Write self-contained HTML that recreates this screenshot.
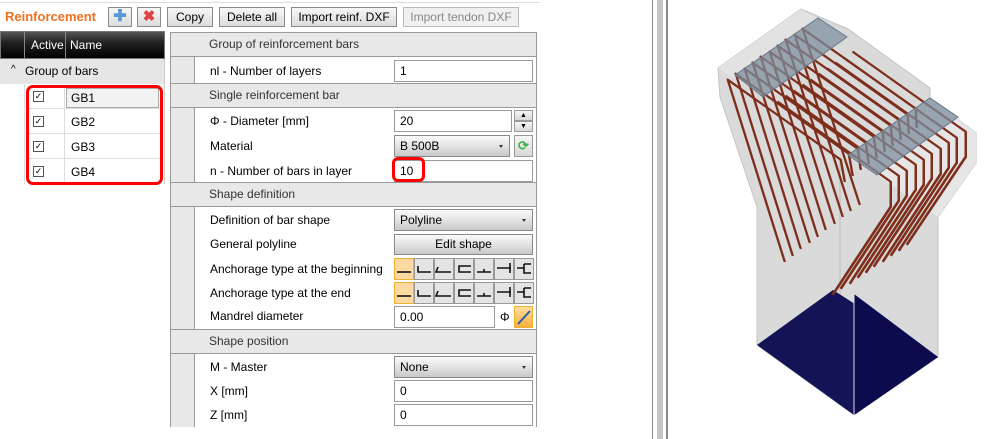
<!DOCTYPE html>
<html><head><meta charset="utf-8"><style>
*{box-sizing:border-box;margin:0;padding:0}
body{width:988px;height:439px;background:#fff;position:relative;overflow:hidden;font-family:"Liberation Sans",sans-serif;font-size:12px;color:#000}
.a{position:absolute}
.btn{position:absolute;top:7px;height:20px;border:1px solid #8a8a8a;background:linear-gradient(#f6f6f6,#dcdcdc);text-align:center;line-height:18px;font-size:12px}
.hd{position:absolute;left:170px;width:367px;height:25px;background:#e8e8e8;border:1px solid #9a9a9a;line-height:23px;padding-left:38px;color:#333}
.row{position:absolute;left:210px;line-height:22px}
.in{position:absolute;left:394px;width:139px;height:22px;border:1px solid #9a9a9a;background:#fff;line-height:20px;padding-left:5px}
.dd{position:absolute;left:394px;width:139px;height:22px;border:1px solid #8a8a8a;background:linear-gradient(#fafafa,#dedede 60%,#c8c8c8);line-height:20px;padding-left:5px}
.dd:after{content:"";position:absolute;right:6px;top:9px;border:2px solid transparent;border-top:3px solid #333}
.cb{position:absolute;left:33px;width:11px;height:11px;border:1px solid #555;background:#fff;font-size:9px;line-height:9px;text-align:center}
</style></head><body>
<div class="a" style="left:0;top:2px;width:540px;height:1px;background:#ddd"></div>
<div class="a" style="left:5px;top:9px;font-weight:bold;font-size:13px;color:#f07020">Reinforcement</div>
<div class="btn" style="left:108px;width:24px;"><span style="color:#5a9ad8;font-weight:bold;font-size:16px;line-height:18px">✚</span></div>
<div class="btn" style="left:137px;width:24px;"><span style="color:#e04040;font-weight:bold;font-size:15px">✖</span></div>
<div class="btn" style="left:167px;width:46px">Copy</div>
<div class="btn" style="left:219px;width:66px">Delete all</div>
<div class="btn" style="left:291px;width:106px">Import reinf. DXF</div>
<div class="btn" style="left:403px;width:116px;color:#888;border-color:#bbb;background:#f0f0f0">Import tendon DXF</div>

<div class="a" style="left:0;top:31px;width:165px;height:28px;background:linear-gradient(#555,#222 40%,#000);border:1px solid #777"></div>
<div class="a" style="left:24px;top:32px;width:1px;height:26px;background:#888"></div>
<div class="a" style="left:65px;top:32px;width:1px;height:26px;background:#888"></div>
<div class="a" style="left:31px;top:38px;color:#fff">Active</div>
<div class="a" style="left:70px;top:38px;color:#fff">Name</div>
<div class="a" style="left:0;top:59px;width:165px;height:25px;background:#e6e6e6;border-right:1px solid #ccc"></div>
<div class="a" style="left:11px;top:64px;font-size:10px">^</div>
<div class="a" style="left:25px;top:64px">Group of bars</div>
<div class="a" style="left:0;top:84px;width:165px;height:100px;border-right:1px solid #ccc"></div>
<div class="a" style="left:28px;top:85px;width:135px;height:98px;background:#fff"></div>
<div class="a" style="left:28px;top:108px;width:135px;height:1px;background:#ddd"></div>
<div class="a" style="left:28px;top:133px;width:135px;height:1px;background:#ddd"></div>
<div class="a" style="left:28px;top:158px;width:135px;height:1px;background:#ddd"></div>
<div class="a" style="left:64px;top:85px;width:1px;height:98px;background:#ddd"></div>
<div class="a" style="left:24px;top:84px;width:1px;height:100px;background:#ddd"></div>
<div class="a" style="left:66px;top:88px;width:93px;height:20px;border:1px solid #aaa;background:#f2f2f2"></div>
<div class="cb" style="top:91px">✓</div><div class="a" style="left:71px;top:91px">GB1</div>
<div class="cb" style="top:116px">✓</div><div class="a" style="left:71px;top:115px">GB2</div>
<div class="cb" style="top:141px">✓</div><div class="a" style="left:71px;top:140px">GB3</div>
<div class="cb" style="top:166px">✓</div><div class="a" style="left:71px;top:165px">GB4</div>
<div class="a" style="left:26px;top:85px;width:137px;height:100px;border:3px solid #f00;border-radius:7px"></div>

<div class="a" style="left:170px;top:32px;width:24px;height:395px;background:#e8e8e8;border-left:1px solid #9a9a9a"></div>
<div class="a" style="left:194px;top:32px;width:343px;height:395px;border-right:1px solid #9a9a9a;border-left:1px solid #9a9a9a"></div>
<div class="hd" style="top:32px">Group of reinforcement bars</div>
<div class="row" style="top:60px">nl - Number of layers</div><div class="in" style="top:60px">1</div>
<div class="hd" style="top:83px">Single reinforcement bar</div>
<div class="row" style="top:110px">Φ - Diameter [mm]</div><div class="in" style="top:110px;width:118px">20</div>
<div class="a" style="left:514px;top:110px;width:19px;height:11px;border:1px solid #999;background:linear-gradient(#f6f6f6,#d8d8d8);font-size:7px;text-align:center;line-height:9px">▲</div>
<div class="a" style="left:514px;top:121px;width:19px;height:11px;border:1px solid #999;background:linear-gradient(#f6f6f6,#d8d8d8);font-size:7px;text-align:center;line-height:9px">▼</div>
<div class="row" style="top:135px">Material</div><div class="dd" style="top:135px;width:116px">B 500B</div>
<div class="a" style="left:514px;top:135px;width:19px;height:22px;border:1px solid #999;background:linear-gradient(#f6f6f6,#d8d8d8);color:#3bb54a;font-size:13px;text-align:center;line-height:20px;font-weight:bold">⟳</div>
<div class="row" style="top:160px">n - Number of bars in layer</div><div class="in" style="top:160px">10</div>
<div class="a" style="left:392px;top:157px;width:33px;height:25px;border:3px solid #f00;border-radius:6px"></div>
<div class="hd" style="top:182px">Shape definition</div>
<div class="row" style="top:209px">Definition of bar shape</div><div class="dd" style="top:209px">Polyline</div>
<div class="row" style="top:233px">General polyline</div>
<div class="a" style="left:394px;top:234px;width:139px;height:21px;border:1px solid #8a8a8a;background:linear-gradient(#fafafa,#dedede 60%,#c8c8c8);text-align:center;line-height:19px">Edit shape</div>
<div class="row" style="top:258px">Anchorage type at the beginning</div>
<div class="row" style="top:282px">Anchorage type at the end</div>
<div class="row" style="top:305px">Mandrel diameter</div>
<div class="in" style="top:306px;width:101px">0.00</div>
<div class="a" style="left:500px;top:310px;font-size:12px">Φ</div>
<div class="a" style="left:514px;top:306px;width:19px;height:22px;border:1px solid #f0b030;background:linear-gradient(#ffe0a0,#f8b040);"><svg width="17" height="20"><line x1="3" y1="17" x2="15" y2="4" stroke="#2060a0" stroke-width="2"/></svg></div>
<div class="hd" style="top:329px">Shape position</div>
<div class="row" style="top:356px">M - Master</div><div class="dd" style="top:356px">None</div>
<div class="row" style="top:380px">X [mm]</div><div class="in" style="top:380px">0</div>
<div class="row" style="top:404px">Z [mm]</div><div class="in" style="top:404px">0</div>

<svg class="a" style="left:394px;top:258px" width="140" height="47">
<g id="anc">
<rect x="0.5" y="0.5" width="19" height="21" fill="#fcd9a0" stroke="#f0b030"/>
<rect x="20.5" y="0.5" width="19" height="21" fill="#e4e4e4" stroke="#999"/>
<rect x="40.5" y="0.5" width="19" height="21" fill="#e4e4e4" stroke="#999"/>
<rect x="60.5" y="0.5" width="19" height="21" fill="#e4e4e4" stroke="#999"/>
<rect x="80.5" y="0.5" width="19" height="21" fill="#e4e4e4" stroke="#999"/>
<rect x="100.5" y="0.5" width="19" height="21" fill="#e4e4e4" stroke="#999"/>
<rect x="120.5" y="0.5" width="19" height="21" fill="#e4e4e4" stroke="#999"/>
<g stroke="#111" stroke-width="1.6" fill="none">
<path d="M3 14H17"/><path d="M24 8V14H37"/><path d="M44 9L42 14H57"/><path d="M77 8H65V14H77"/><path d="M83 14H97M90 14V11"/><path d="M103 10H117M116 5V15"/><path d="M123 10H130M130 6V15H137M130 6H137"/>
</g></g>
<use href="#anc" y="24"/>
</svg>

<div class="a" style="left:652px;top:0;width:1px;height:439px;background:#888"></div>
<div class="a" style="left:657px;top:0;width:6px;height:439px;background:#c4c4c4"></div>
<div class="a" style="left:666px;top:0;width:2px;height:439px;background:#888"></div>

<svg class="a" style="left:0;top:0" width="988" height="439">
<polygon points="801,9 848,29 930,88 930,98 976,133 976,163 938,217 938,357 854,415 757,345 757,207 720,97 718,68" fill="#dadada" stroke="#c4c4c4"/>
<polygon points="718,68 801,9 848,37 763,97" fill="#e2e2e2"/>
<polygon points="848,155 930,98 976,133 976,163 938,217 877,175" fill="#e6e6e6"/>
<line x1="840" y1="157" x2="840" y2="345" stroke="#bbb"/>
<polygon points="757,345 833,290 938,357 854,415" fill="#131356"/>
<polygon points="854,415 854,294 938,357" fill="#0b0b4e"/>
<line x1="854" y1="293" x2="854" y2="415" stroke="#ddd"/>
<g id="bars" fill="none" stroke="#7e2f1c" stroke-width="2" stroke-linejoin="round">
<path d="M785 262L728 80L841 160L845 182"/>
<path d="M793 256L736 74L849 154L853 176"/>
<path d="M801 249L745 69L858 149L861 170"/>
<path d="M810 243L753 63L866 143L869 164"/>
<path d="M818 237L761 57L874 137L877 158"/>
<path d="M826 230L770 52L883 132L885 152"/>
<path d="M835 224L778 46L891 126L893 146"/>
<path d="M843 217L786 40L899 120L901 140"/>
<path d="M851 211L795 35L908 115L909 134"/>
<path d="M860 205L803 29L916 109L917 128"/>
<path d="M833 295L891 207L891 182L778 102"/>
<path d="M841 289L899 201L899 176L786 96"/>
<path d="M850 284L907 196L907 171L794 91"/>
<path d="M858 278L916 190L916 165L803 85"/>
<path d="M866 273L924 185L924 160L811 80"/>
<path d="M874 267L932 179L932 154L819 74"/>
<path d="M883 262L941 174L941 149L828 69"/>
<path d="M891 256L949 168L949 143L836 63"/>
<path d="M899 251L957 163L957 138L844 58"/>
<path d="M907 245L966 157L966 132L853 52"/>
</g>
<use href="#bars" style="stroke:#d06a20;stroke-width:0.6" transform="translate(-0.5,-0.5)"/>
<polygon points="735,75 818,18 847,37 763,97" fill="#7e8e9e" fill-opacity="0.75" stroke="#6a7a8a"/>
<polygon points="848,155 930,98 958,117 877,175" fill="#7e8e9e" fill-opacity="0.75" stroke="#6a7a8a"/>
</svg>
</body></html>
